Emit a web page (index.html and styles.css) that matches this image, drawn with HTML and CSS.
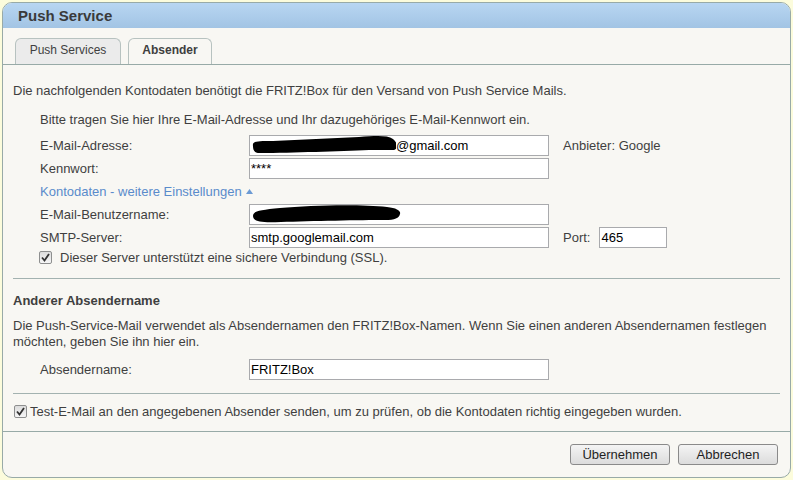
FILE: index.html
```html
<!DOCTYPE html>
<html lang="de">
<head>
<meta charset="utf-8">
<title>Push Service</title>
<link rel="stylesheet" href="styles.css">
</head>
<body>
<div class="page">
  <div class="panel">
    <div class="head">Push Service</div>
    <div class="tabs">
      <div class="tab">Push Services</div>
      <div class="tab active">Absender</div>
    </div>
    <div class="content">
      <p class="intro">Die nachfolgenden Kontodaten benötigt die FRITZ!Box für den Versand von Push Service Mails.</p>
      <div class="block">
        <p class="hint">Bitte tragen Sie hier Ihre E-Mail-Adresse und Ihr dazugehöriges E-Mail-Kennwort ein.</p>
        <div class="row">
          <span class="lbl">E-Mail-Adresse:</span>
          <div class="field"><svg class="scrib" width="145" height="19" viewBox="0 0 145 19"><path d="M2,10 C1,5 6,5 22,5 L108,1 C124,0 136,-1 142,3 C147,7 147,13 143,14 L118,14 C88,15 42,17 9,17 C3,17 2,14 2,10 Z" fill="#000"/></svg>@gmail.com</div>
          <span class="aside">Anbieter: Google</span>
        </div>
        <div class="row">
          <span class="lbl">Kennwort:</span>
          <input class="field" type="text" value="****">
        </div>
        <div class="row">
          <span class="link">Kontodaten - weitere Einstellungen <svg class="tri" width="7" height="5" viewBox="0 0 7 5"><path d="M0,5 L3.5,0 L7,5 Z" fill="#6b9ad4"/></svg></span>
        </div>
        <div class="row">
          <span class="lbl">E-Mail-Benutzername:</span>
          <div class="field"><svg class="scrib" width="150" height="19" viewBox="0 0 150 19"><path d="M2,11 C2,6 9,5 29,3 C60,0 110,-1 136,2 C146,3 150,6 149,9 C148,13 144,15 134,15 C110,15 60,16 30,17 C12,18 2,17 2,11 Z" fill="#000"/></svg></div>
        </div>
        <div class="row">
          <span class="lbl">SMTP-Server:</span>
          <input class="field" type="text" value="smtp.googlemail.com">
          <span class="aside">Port:</span>
          <input class="field port" type="text" value="465">
        </div>
        <div class="check-row">
          <span class="cb"><svg width="9" height="9" viewBox="0 0 9 9"><path d="M1,4.5 L3.5,7.5 L8,1" fill="none" stroke="#333" stroke-width="1.8"/></svg></span>
          <span>Dieser Server unterstützt eine sichere Verbindung (SSL).</span>
        </div>
      </div>
      <hr class="sep">
      <h3 class="title">Anderer Absendername</h3>
      <p class="desc">Die Push-Service-Mail verwendet als Absendernamen den FRITZ!Box-Namen. Wenn Sie einen anderen Absendernamen festlegen möchten, geben Sie ihn hier ein.</p>
      <div class="block">
        <div class="row">
          <span class="lbl">Absendername:</span>
          <input class="field" type="text" value="FRITZ!Box">
        </div>
      </div>
      <hr class="sep sep2">
      <div class="check-row test">
        <span class="cb"><svg width="9" height="9" viewBox="0 0 9 9"><path d="M1,4.5 L3.5,7.5 L8,1" fill="none" stroke="#333" stroke-width="1.8"/></svg></span>
        <span>Test-E-Mail an den angegebenen Absender senden, um zu prüfen, ob die Kontodaten richtig eingegeben wurden.</span>
      </div>
    </div>
    <div class="foot">
      <button class="btn">Übernehmen</button>
      <button class="btn">Abbrechen</button>
    </div>
  </div>
</div>
</body>
</html>
```
FILE: styles.css
```css
* { box-sizing: border-box; }
body {
  margin: 0;
  background: #fcfcdc;
  font-family: "Liberation Sans", Arial, sans-serif;
  font-size: 13px;
  color: #3f3f3f;
}
.page { padding: 2px; }
.panel {
  border: 1px solid #98aaa7;
  border-radius: 10px;
  background: #f8f7f3;
  overflow: hidden;
}
.head {
  height: 25px;
  line-height: 25px;
  padding-left: 15px;
  background: linear-gradient(#b8d6f2, #a2c4e4);
  font-weight: bold;
  font-size: 15px;
  color: #3a3a3a;
}
.tabs {
  display: flex;
  gap: 7px;
  padding: 10px 0 0 12px;
  border-bottom: 1px solid #98aaa7;
}
.tab {
  width: 106px;
  height: 26px;
  border: 1px solid #b7c2c0;
  border-bottom: 0;
  border-radius: 6px 6px 0 0;
  background: #ebebeb;
  font-size: 12px;
  line-height: 23px;
  text-align: center;
  color: #3f3f3f;
}
.tab.active {
  width: 84px;
  background: #f8f7f3;
  font-weight: bold;
}
.content { padding: 18px 10px 12px; }
p { margin: 0; line-height: 16px; }
.intro { margin-bottom: 13px; }
.block { padding-left: 27px; }
.hint { margin-bottom: 7px; }
.row {
  display: flex;
  align-items: center;
  height: 21px;
  margin-bottom: 2px;
}
.lbl { width: 209px; flex: none; }
.field {
  width: 300px;
  height: 21px;
  flex: none;
  border: 1px solid #a9aaad;
  background: #fff;
  padding: 0 1px;
  font-family: inherit;
  font-size: 13px;
  color: #000;
  line-height: 19px;
  white-space: nowrap;
  overflow: hidden;
  margin: 0;
  outline: none;
}
.field.port { width: 68px; }
.scrib { display: inline-block; vertical-align: top; }
.aside { margin: 0 9px 0 14px; }
.link { color: #5a8bcb; }
.tri { display: inline-block; vertical-align: 2px; margin-left: 1px; }
.check-row {
  display: flex;
  align-items: center;
  height: 15px;
  line-height: 15px;
  margin-left: -1px;
}
.cb {
  width: 13px;
  height: 13px;
  flex: none;
  border: 1px solid #8e8f8f;
  border-radius: 2px;
  background: linear-gradient(#dcdcdc, #f6f6f6);
  display: flex;
  align-items: center;
  justify-content: center;
  margin-right: 8px;
}
.sep {
  border: 0;
  border-top: 1px solid #a3b2b0;
  height: 0;
  margin: 13px 0 0;
}
.title {
  margin: 14px 0 0;
  font-size: 13px;
  line-height: 16px;
  font-weight: bold;
  color: #3f3f3f;
}
.desc { margin-top: 9px; margin-bottom: 9px; }
.sep2 { margin-top: 13px; }
.check-row.test {
  margin: 9px 0 0 1px;
  height: 16px;
}
.check-row.test .cb { margin-right: 3px; }
.foot {
  border-top: 1px solid #98aaa7;
  padding: 12px 12px 12px 0;
  display: flex;
  justify-content: flex-end;
  gap: 8px;
}
.btn {
  width: 100px;
  height: 21px;
  border: 1px solid #8a8a8a;
  border-radius: 3px;
  background: linear-gradient(#f4f4f4, #dcdcdc);
  font-family: inherit;
  font-size: 13px;
  color: #1f1f1f;
  padding: 0;
}
```
